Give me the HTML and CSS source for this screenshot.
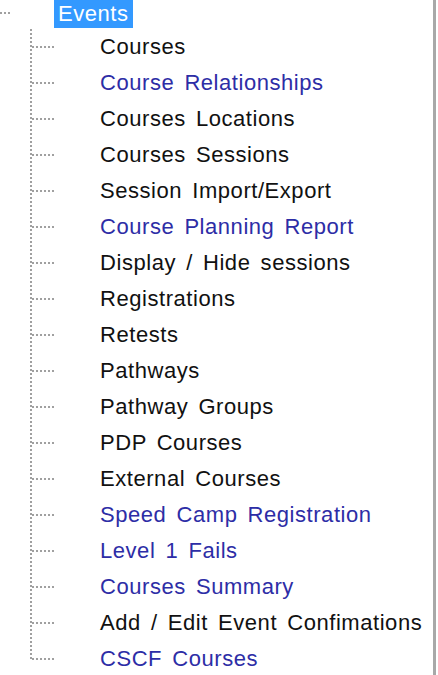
FILE: index.html
```html
<!DOCTYPE html>
<html>
<head>
<meta charset="utf-8">
<link rel="stylesheet" href="styles.css">
</head>
<body>
<div class="panel">
  <div class="root-row">
    <span class="root-dots"></span>
    <span class="sel">Events</span>
  </div>
  <ul class="children">
    <li class="item"><span class="conn"></span><span class="label">Courses</span></li>
    <li class="item"><span class="conn"></span><span class="label link">Course Relationships</span></li>
    <li class="item"><span class="conn"></span><span class="label">Courses Locations</span></li>
    <li class="item"><span class="conn"></span><span class="label">Courses Sessions</span></li>
    <li class="item"><span class="conn"></span><span class="label">Session Import/Export</span></li>
    <li class="item"><span class="conn"></span><span class="label link">Course Planning Report</span></li>
    <li class="item"><span class="conn"></span><span class="label">Display / Hide sessions</span></li>
    <li class="item"><span class="conn"></span><span class="label">Registrations</span></li>
    <li class="item"><span class="conn"></span><span class="label">Retests</span></li>
    <li class="item"><span class="conn"></span><span class="label">Pathways</span></li>
    <li class="item"><span class="conn"></span><span class="label">Pathway Groups</span></li>
    <li class="item"><span class="conn"></span><span class="label">PDP Courses</span></li>
    <li class="item"><span class="conn"></span><span class="label">External Courses</span></li>
    <li class="item"><span class="conn"></span><span class="label link">Speed Camp Registration</span></li>
    <li class="item"><span class="conn"></span><span class="label link">Level 1 Fails</span></li>
    <li class="item"><span class="conn"></span><span class="label link">Courses Summary</span></li>
    <li class="item"><span class="conn"></span><span class="label">Add / Edit Event Confimations</span></li>
    <li class="item last"><span class="conn"></span><span class="label link">CSCF Courses</span></li>
  </ul>
</div>
</body>
</html>
```
FILE: styles.css
```css
html, body {
  margin: 0;
  padding: 0;
  background: #ffffff;
}

.panel {
  width: 433px;
  height: 675px;
  border-right: 3px solid #a8a8a8;
  background: #ffffff;
  font-family: "Liberation Sans", Arial, sans-serif;
  font-size: 22px;
  letter-spacing: 0.55px;
  word-spacing: 3.5px;
  color: #111111;
  overflow: hidden;
}

.root-row {
  display: flex;
  align-items: flex-start;
  height: 29px;
}

.root-dots {
  width: 12px;
  height: 2px;
  margin-top: 12px;
  background: repeating-linear-gradient(to right, #a0a0a0 0 2px, transparent 2px 4px);
}

.sel {
  margin-left: 42px;
  height: 28px;
  line-height: 27px;
  padding: 0 4px 0 4px;
  background: #3399ff;
  color: #ffffff;
}

.children {
  list-style: none;
  margin: 0;
  padding: 0;
}

.item {
  display: flex;
  align-items: center;
  height: 36px;
}

.conn {
  flex: none;
  width: 100px;
  height: 36px;
  background-image:
    repeating-linear-gradient(to bottom, #a0a0a0 0 2px, transparent 2px 4px),
    repeating-linear-gradient(to right, #a0a0a0 0 2px, transparent 2px 4px);
  background-repeat: no-repeat;
  background-position: 30px 0, 32px 17px;
  background-size: 2px 36px, 24px 2px;
}

.item.last .conn {
  background-size: 2px 19px, 24px 2px;
}

.label {
  white-space: nowrap;
  line-height: 36px;
}

.link {
  color: #2d2da6;
}
```
